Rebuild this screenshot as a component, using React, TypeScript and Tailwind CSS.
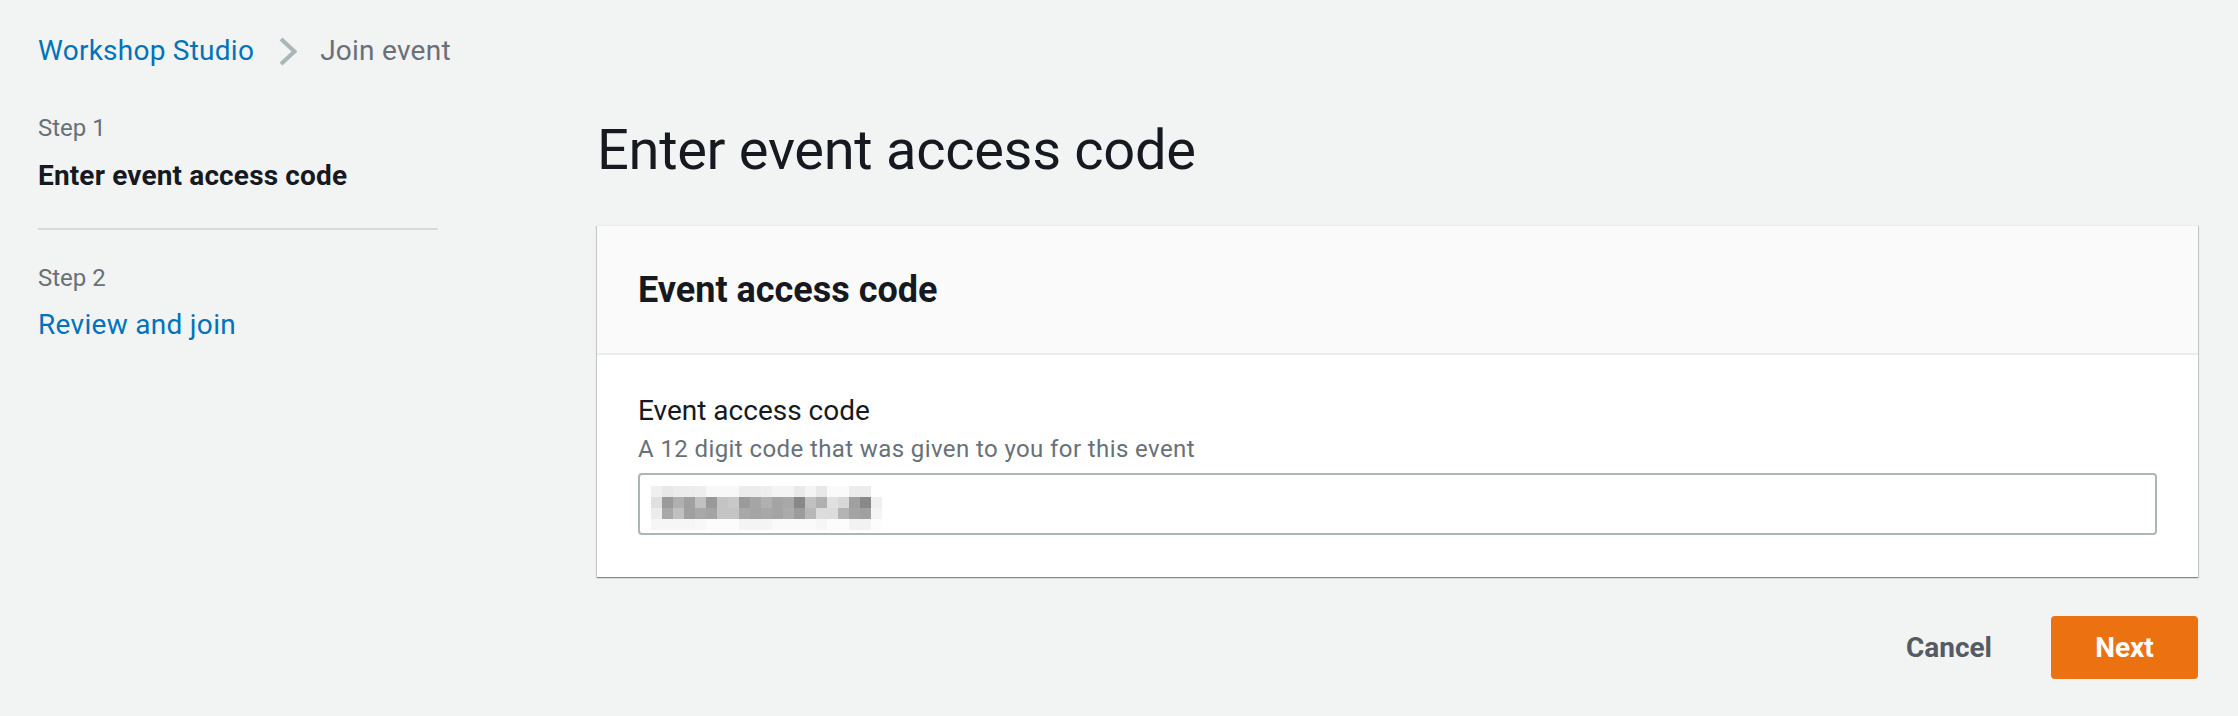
// pixelated (redacted) access code in the input
const mosaic: string[][] = [
  ['f0', 'e8', 'ec', 'ec', 'ee', 'f8', 'f8', 'f8', 'ec', 'ec', 'ee', 'f4', 'f4', 'ea', 'f4', 'e8', 'fa', 'fa', 'ec', 'ec', 'ff'],
  ['e0', '9a', 'b0', 'a0', 'c0', '99', 'c4', 'c8', '9a', 'a6', 'b0', 'a4', 'a8', '88', 'c0', 'b0', 'e0', 'd8', 'a0', '88', 'f0'],
  ['ec', 'a8', 'c0', 'a0', 'a8', 'a4', 'c4', 'c4', 'a8', 'a4', 'a8', 'a4', 'ab', '9c', 'b8', 'dc', 'dc', 'b4', 'a4', 'a0', 'f4'],
  ['f6', 'f6', 'f6', 'f6', 'f8', 'fc', 'fc', 'fc', 'f4', 'f4', 'f4', 'fa', 'fa', 'fa', 'fa', 'f6', 'fc', 'fc', 'f2', 'f2', 'fc'],
];

function RedactedCode() {
  return (
    <svg width={231} height={44} viewBox="0 0 231 44">
      {mosaic.map((row, r) =>
        row.map((v, c) => (
          <rect key={`${r}-${c}`} x={c * 11} y={r * 11} width={11} height={11} fill={`#${v}${v}${v}`} />
        )),
      )}
    </svg>
  );
}

export default function App() {
  return (
    <div className="min-h-screen bg-[#f2f3f3] font-['Roboto','Liberation_Sans',sans-serif] text-[#16191f]">
      {/* 面包屑 */}
      <nav className="flex items-center pl-[38px] pt-[31px] h-[71px] text-[28px] leading-[40px] tracking-[0.25px]">
        <a className="text-[#0073bb]">Workshop Studio</a>
        <svg width={18} height={29} viewBox="0 0 18 29" className="ml-[25px] mr-[23px]">
          <path d="M2 2 L15.5 14.5 L2 27" fill="none" stroke="#aab7b8" strokeWidth={4} />
        </svg>
        <span className="text-[#687078]">Join event</span>
      </nav>

      <div className="flex pl-[38px] pr-[40px]">
        {/* 步骤导航 */}
        <aside className="w-[400px] pt-[41px] shrink-0">
          <div className="text-[24px] leading-[32px] text-[#687078]">Step 1</div>
          <div className="mt-[12px] text-[28px] leading-[40px] font-bold tracking-[0.15px]">Enter event access code</div>
          <div className="mt-[32px] h-[2px] bg-[#d5dbdb]" />
          <div className="mt-[32px] text-[24px] leading-[32px] text-[#687078]">Step 2</div>
          <div className="mt-[11px] text-[28px] leading-[40px] tracking-[0.3px] text-[#0073bb]">Review and join</div>
        </aside>

        {/* 主体 */}
        <main className="flex-1 ml-[159px] pt-[43px]">
          <h1 className="text-[56px] leading-[72px] font-normal tracking-[-0.3px]">Enter event access code</h1>

          <section className="mt-[39px] bg-white border-t border-[#eaeded] shadow-[0_1px_1px_0_rgba(0,28,36,0.3),1px_1px_1px_0_rgba(0,28,36,0.15),-1px_1px_1px_0_rgba(0,28,36,0.15)]">
            <div className="h-[129px] flex items-center px-[41px] bg-[#fafafa] border-b-2 border-[#eaeded]">
              <h2 className="text-[36px] leading-[48px] font-bold">Event access code</h2>
            </div>
            <div className="pt-[36px] pb-[42px] pl-[41px] pr-[41px]">
              <label className="block text-[28px] leading-[40px]">Event access code</label>
              <div className="mt-[2px] text-[24px] leading-[32px] tracking-[0.4px] text-[#687078]">
                A 12 digit code that was given to you for this event
              </div>
              <div className="mt-[8px] h-[62px] border-2 border-[#aab7b8] rounded-[4px] bg-white pl-[11px] pt-[11px]">
                <RedactedCode />
              </div>
            </div>
          </section>

          <div className="mt-[39px] flex justify-end items-center">
            <button className="h-[63px] px-[40px] mr-[19px] text-[28px] font-bold text-[#545b64]">Cancel</button>
            <button className="h-[63px] w-[147px] flex items-center justify-center rounded-[4px] bg-[#ec7211] text-[28px] font-bold text-white">
              Next
            </button>
          </div>
        </main>
      </div>
    </div>
  );
}
